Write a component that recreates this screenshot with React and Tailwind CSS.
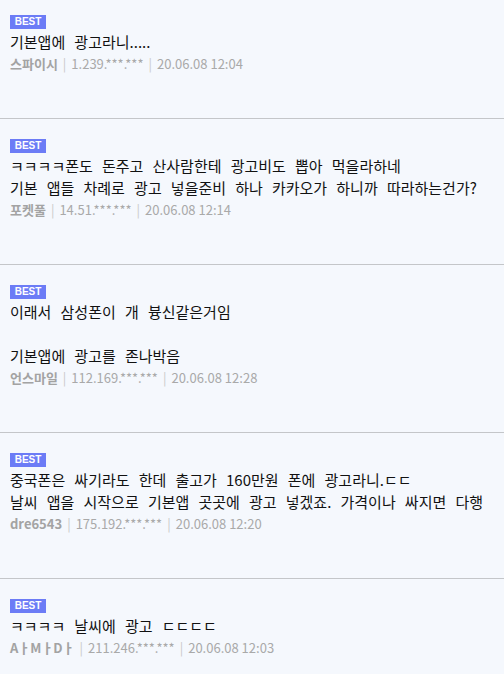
import React from "react";

const items = [
  { lines: ["기본앱에 광고라니....."], name: "스파이시", ip: "1.239.***.***", date: "20.06.08 12:04" },
  { lines: ["ㅋㅋㅋㅋ폰도 돈주고 산사람한테 광고비도 뽑아 먹을라하네", "기본 앱들 차례로 광고 넣을준비 하나 카카오가 하니까 따라하는건가?"], name: "포켓풀", ip: "14.51.***.***", date: "20.06.08 12:14" },
  { lines: ["이래서 삼성폰이 개 븅신같은거임", "", "기본앱에 광고를 존나박음"], name: "언스마일", ip: "112.169.***.***", date: "20.06.08 12:28" },
  { lines: ["중국폰은 싸기라도 한데 출고가 160만원 폰에 광고라니.ㄷㄷ", "날씨 앱을 시작으로 기본앱 곳곳에 광고 넣겠죠. 가격이나 싸지면 다행"], name: "dre6543", ip: "175.192.***.***", date: "20.06.08 12:20", tight: [0] },
  { lines: ["ㅋㅋㅋㅋ 날씨에 광고 ㄷㄷㄷㄷ"], name: "AㅏMㅏDㅏ", ip: "211.246.***.***", date: "20.06.08 12:03" },
];

export default function App() {
  return (
    <div
      className="w-[504px] h-[674px] overflow-hidden bg-[#f5f8fd]"
      style={{ fontFamily: '"Noto Sans CJK KR", "Noto Sans", sans-serif' }}
    >
      {items.map((it, i) => (
        <div
          key={i}
          className={`px-[10px] pb-[43px] border-b border-[#c4c6c9] ${i === 0 ? "pt-[15px]" : "pt-[20px]"}`}
        >
          <div className="flex">
            <span className="h-[14px] w-[36px] bg-[#6c7cf6] text-white text-[10px] font-bold leading-[14px] text-center" style={{ fontFamily: '"Liberation Sans", Arial, sans-serif' }}>
              BEST
            </span>
          </div>
          <div className="mt-[2px] text-[15px] leading-[22px] text-[#111] whitespace-nowrap [word-spacing:5.8px]">
            {it.lines.map((l, j) => (
              <div key={j} className="h-[22px]">{l}</div>
            ))}
          </div>
          <div className="h-[22px] leading-[22px] text-[13px] text-[#a9a9a9] whitespace-nowrap">
            <span className="font-bold text-[#a3a3a3]">{it.name}</span>
            <span className="text-[#c9c9c9] mx-[5px]">|</span>
            <span>{it.ip}</span>
            <span className="text-[#c9c9c9] mx-[5px]">|</span>
            <span>{it.date}</span>
          </div>
        </div>
      ))}
    </div>
  );
}
